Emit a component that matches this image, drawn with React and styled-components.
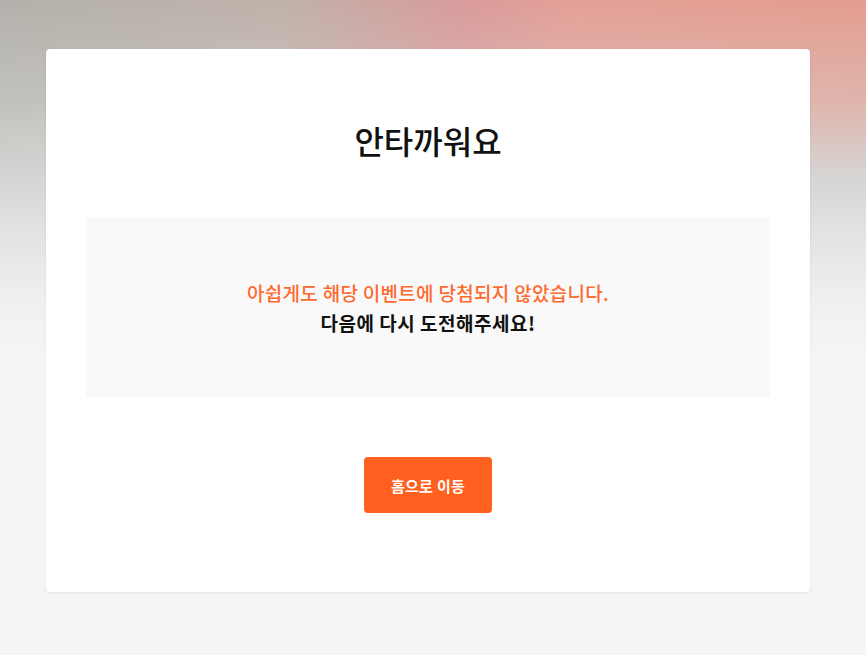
import React from 'react'
import styled, { createGlobalStyle } from 'styled-components'

const GlobalStyle = createGlobalStyle`
  html, body {
    margin: 0;
    padding: 0;
  }
  body {
    font-family: "Noto Sans CJK KR", "Noto Sans", sans-serif;
    background-color: #f5f5f5;
  }
`

const Page = styled.div`
  min-height: 655px;
  box-sizing: border-box;
  padding: 49px 56px 40px 46px;
  background:
    linear-gradient(
      to bottom,
      rgba(214, 216, 214, 0) 0px,
      rgba(214, 216, 214, 0.4) 100px,
      #d5d7d5 180px,
      #e2e5e4 240px,
      #eef0ef 300px,
      #f5f5f5 360px
    ),
    linear-gradient(100deg, #b3b1ab 0%, #bfb2aa 30%, #d99a9a 50%, #e4a096 62%, #e49c8e 100%);
  background-repeat: no-repeat;
  background-size: 100% 100%, 100% 380px;
  background-color: #f5f5f5;
`

const Card = styled.section`
  background: #fff;
  border-radius: 4px;
  box-shadow: 0 1px 3px rgba(0, 0, 0, 0.08);
  padding: 68px 40px 79px;
  display: flex;
  flex-direction: column;
  align-items: center;
`

const Title = styled.h1`
  margin: 0;
  font-size: 32px;
  line-height: 46px;
  font-weight: 500;
  color: #111;
`

const MessageBox = styled.div`
  align-self: stretch;
  margin-top: 54px;
  height: 180px;
  background: #f9f9f9;
  display: flex;
  flex-direction: column;
  align-items: center;
  justify-content: center;
  padding-top: 2px;
  box-sizing: border-box;
`

const Line = styled.p`
  margin: 0;
  font-size: 19px;
  line-height: 30px;
  font-weight: ${(p) => (p.$accent ? 500 : 600)};
  letter-spacing: ${(p) => (p.$accent ? '0.3px' : '0.5px')};
  color: ${(p) => (p.$accent ? '#ff6a2e' : '#111')};
`

const HomeButton = styled.button`
  margin-top: 60px;
  width: 128px;
  height: 56px;
  border: 0;
  border-radius: 4px;
  background: #ff5f1f;
  color: #fff;
  font-family: inherit;
  font-size: 15px;
  font-weight: 700;
  letter-spacing: 0.3px;
  cursor: pointer;
`

export default function App() {
  return (
    <>
      <GlobalStyle />
      <Page>
        <Card>
          <Title>안타까워요</Title>
          <MessageBox>
            <Line $accent>아쉽게도 해당 이벤트에 당첨되지 않았습니다.</Line>
            <Line>다음에 다시 도전해주세요!</Line>
          </MessageBox>
          <HomeButton>홈으로 이동</HomeButton>
        </Card>
      </Page>
    </>
  )
}
